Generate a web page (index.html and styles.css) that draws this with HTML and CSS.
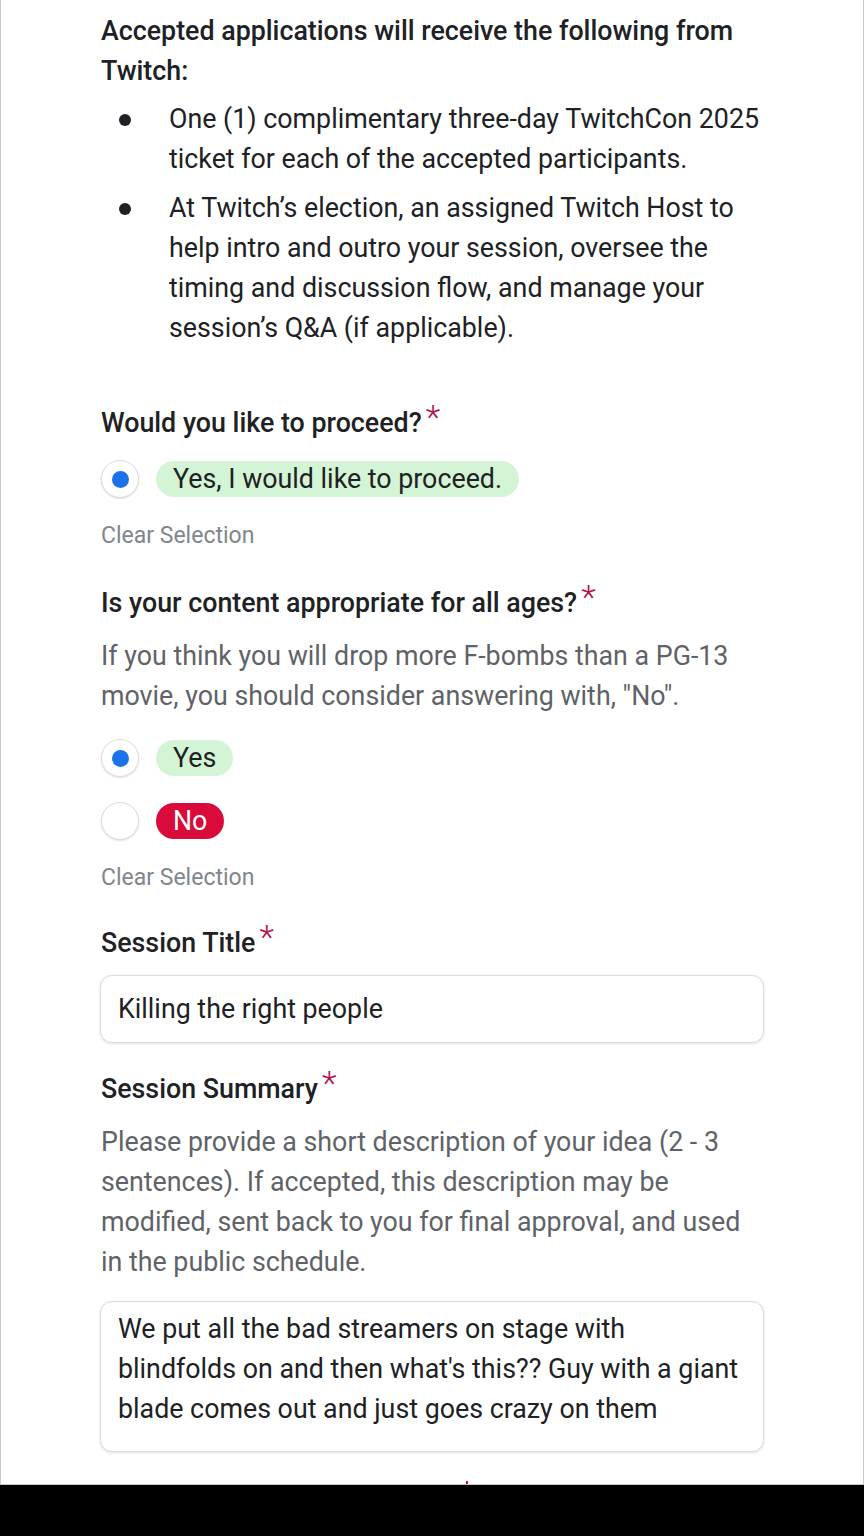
FILE: index.html
```html
<!DOCTYPE html>
<html>
<head>
<meta charset="utf-8">
<link rel="stylesheet" href="styles.css">
</head>
<body>
<div class="screen">
  <div class="page">
    <div class="content">
      <p class="intro">Accepted applications will receive the following from Twitch:</p>
      <ul class="bullets">
        <li>One (1) complimentary three-day TwitchCon 2025 ticket for each of the accepted participants.</li>
        <li>At Twitch’s election, an assigned Twitch Host to help intro and outro your session, oversee the timing and discussion flow, and manage your session’s Q&amp;A (if applicable).</li>
      </ul>

      <div class="question q1">
        <div class="qtitle">Would you like to proceed?<span class="req">*</span></div>
        <div class="options">
          <div class="option">
            <span class="radio checked"></span>
            <span class="pill green">Yes, I would like to proceed.</span>
          </div>
        </div>
        <div class="clear">Clear Selection</div>
      </div>

      <div class="question q2">
        <div class="qtitle">Is your content appropriate for all ages?<span class="req">*</span></div>
        <p class="desc">If you think you will drop more F-bombs than a PG-13 movie, you should consider answering with, "No".</p>
        <div class="options">
          <div class="option">
            <span class="radio checked"></span>
            <span class="pill green">Yes</span>
          </div>
          <div class="option">
            <span class="radio"></span>
            <span class="pill red">No</span>
          </div>
        </div>
        <div class="clear">Clear Selection</div>
      </div>

      <div class="question q3">
        <div class="qtitle">Session Title<span class="req">*</span></div>
        <div class="field single">Killing the right people</div>
      </div>

      <div class="question q4">
        <div class="qtitle">Session Summary<span class="req">*</span></div>
        <p class="desc">Please provide a short description of your idea (2 - 3 sentences). If accepted, this description may be modified, sent back to you for final approval, and used in the public schedule.</p>
        <div class="field multi">We put all the bad streamers on stage with blindfolds on and then what's this?? Guy with a giant blade comes out and just goes crazy on them</div>
      </div>
      <div class="next-mark"></div>
    </div>
  </div>
  <div class="nav"></div>
</div>
</body>
</html>
```

FILE: styles.css
```css
html, body {
  margin: 0;
  padding: 0;
  background: #000;
}
.screen {
  width: 864px;
  height: 1536px;
  display: flex;
  flex-direction: column;
  overflow: hidden;
}
.page {
  height: 1485px;
  background: #fff;
  border-left: 1px solid #c8c8c8;
  border-right: 1px solid #c8c8c8;
  border-bottom: 1px solid #c8c8c8;
  box-sizing: border-box;
  overflow: hidden;
}
.nav {
  flex: 1;
  background: #000;
}
.content {
  padding: 11px 0 0 100px;
  width: 663px;
  font-family: Roboto, "Liberation Sans", sans-serif;
  color: #202124;
  font-size: 26.8px;
  line-height: 40px;
}
p { margin: 0; }
.intro {
  font-weight: 500;
  color: #202124;
}
.bullets {
  margin: 8px 0 0 0;
  padding: 0 0 0 68px;
  list-style: none;
}
.bullets li {
  position: relative;
  margin-bottom: 9px;
}
.bullets li::before {
  content: "";
  position: absolute;
  left: -50px;
  top: 15px;
  width: 12px;
  height: 12px;
  border-radius: 50%;
  background: #202124;
}
.q1 { margin-top: 52px; }
.q2 { margin-top: 24px; }
.q3 { margin-top: 22px; }
.q4 { margin-top: 23px; }
.qtitle {
  font-weight: 500;
  line-height: 40px;
}
.req {
  color: #b3124a;
  font-weight: 300;
  font-size: 34px;
  margin-left: 4px;
  position: relative;
  top: -3px;
}
.desc {
  color: #5f6368;
  margin-top: 13px;
}
.options {
  margin-top: 17px;
  display: flex;
  flex-direction: column;
  gap: 25px;
}
.q2 .options { margin-top: 23px; }
.option {
  display: flex;
  align-items: center;
  height: 38px;
}
.radio {
  width: 38px;
  height: 38px;
  border-radius: 50%;
  border: 1px solid #dadce0;
  box-shadow: 0 1px 2px rgba(0,0,0,0.12);
  background: #fff;
  display: flex;
  align-items: center;
  justify-content: center;
  box-sizing: border-box;
}
.radio.checked::after {
  content: "";
  width: 17px;
  height: 17px;
  border-radius: 50%;
  background: #1a73e8;
}
.pill {
  margin-left: 17px;
  height: 36px;
  line-height: 36px;
  padding: 0 17px;
  border-radius: 18px;
}
.pill.green {
  background: #d4f5d5;
  color: #202124;
}
.pill.red {
  background: #d80b3a;
  color: #fff;
}
.clear {
  margin-top: 18px;
  color: #80868b;
  font-size: 23px;
  line-height: 40px;
}
.field {
  margin-top: 12px;
  margin-left: -1px;
  border: 1px solid #dadce0;
  border-radius: 12px;
  box-shadow: 0 1px 3px rgba(0,0,0,0.12);
  padding: 0 17px;
  background: #fff;
}
.field.single {
  height: 68px;
  line-height: 66px;
  box-sizing: border-box;
}
.field.multi {
  margin-top: 19px;
  padding-top: 7px;
  padding-bottom: 22px;
  line-height: 40px;
}
.next-mark {
  width: 2px;
  height: 6px;
  background: #b3124a;
  margin: 29px 0 0 365px;
}
```
